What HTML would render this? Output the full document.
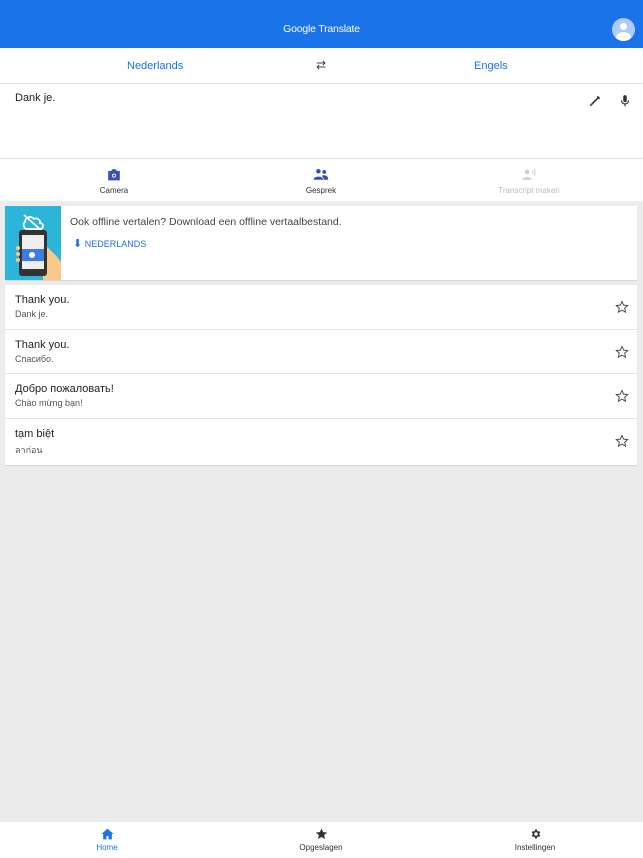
<!DOCTYPE html>
<html><head><meta charset="utf-8"><style>
*{margin:0;padding:0;box-sizing:border-box}
body{width:643px;height:858px;background:#ececec;font-family:"Liberation Sans",Arial,sans-serif;position:relative;overflow:hidden;color:#222}
.hdr{position:absolute;left:0;top:0;width:643px;height:48px;background:#1a73e8;color:#fff;text-align:center;font-size:10.5px;line-height:59px;letter-spacing:-.2px}
.av{position:absolute;right:8px;top:18px;width:23px;height:23px;border-radius:50%;background:#aecbfa;overflow:hidden}
.lang{position:absolute;top:48px;left:0;width:643px;height:36px;background:#fff;border-bottom:1px solid #ddd;font-size:11px;color:#1a73e8}
.lang span{position:absolute;top:12px}
.inp{position:absolute;top:84px;left:0;width:643px;height:75px;background:#fff;border-bottom:1px solid #ddd;font-size:11px}
.tabs{position:absolute;top:159px;left:0;width:643px;height:42px;background:#fff;font-size:8px;color:#333}
.tab{position:absolute;top:0;width:120px;text-align:center}
.tab div{margin-top:3px}
.card{position:absolute;left:5px;width:632px;background:#fff;box-shadow:0 1px 1px rgba(0,0,0,.1)}
.row{height:44.5px;border-bottom:1px solid #e6e6e6;position:relative;padding:9px 0 0 10px}
.row b{display:block;font-weight:normal;font-size:11px;color:#222}
.row i{display:block;font-style:normal;font-size:9px;color:#555;margin-top:3px}
.row svg{position:absolute;right:8px;top:15px}
.bot{position:absolute;left:0;top:822px;width:643px;height:36px;background:#fff;font-size:8px;color:#333}
.bi{position:absolute;top:6px;width:100px;text-align:center}
.bi div{margin-top:1px}
</style></head><body>
<div class="hdr">Google Translate<div class="av"><div style="position:absolute;left:8px;top:5px;width:7px;height:7px;border-radius:50%;background:#fff"></div><div style="position:absolute;left:4px;top:14px;width:15px;height:12px;border-radius:50%;background:#fff"></div></div></div>
<div class="lang"><span style="left:127px">Nederlands</span><span style="left:316px;color:#444;top:10px;font-size:12px">⇄</span><span style="left:474px">Engels</span></div>
<div class="inp"><div style="position:absolute;left:15px;top:8px">Dank je.</div>
<svg style="position:absolute;left:588px;top:10px" width="14" height="14" viewBox="0 0 24 24"><path d="M3 21l3-1 12-12-2-2L4 18z M17 3l4 4-2 2-4-4z" fill="#333"/></svg>
<svg style="position:absolute;left:618px;top:9px" width="14" height="16" viewBox="0 0 24 24"><path d="M12 14a3 3 0 0 0 3-3V5a3 3 0 0 0-6 0v6a3 3 0 0 0 3 3zm5-3a5 5 0 0 1-10 0H5a7 7 0 0 0 6 6.9V21h2v-3.1A7 7 0 0 0 19 11z" fill="#333"/></svg></div>
<div class="tabs">
<div class="tab" style="left:54px"><svg style="margin-top:9px" width="14" height="13" viewBox="0 0 24 22"><path d="M2 5h5l2-3h6l2 3h5v16H2z" fill="#3c4fb5"/><circle cx="12" cy="13" r="3.5" fill="#fff"/><circle cx="12" cy="13" r="2" fill="#3c4fb5"/></svg><div>Camera</div></div>
<div class="tab" style="left:261px"><svg style="margin-top:9px" width="16" height="13" viewBox="0 0 24 20"><circle cx="8" cy="5" r="3.5" fill="#3c4fb5"/><circle cx="17" cy="6" r="3" fill="#3c4fb5"/><path d="M1 17c0-5 14-5 14 0v1H1zM13 12c5-2 10 0 10 5v1h-7c0-3-1-4-3-6z" fill="#3c4fb5"/></svg><div>Gesprek</div></div>
<div class="tab" style="left:469px;color:#bbb"><svg style="margin-top:9px" width="16" height="13" viewBox="0 0 24 20"><circle cx="9" cy="6" r="3.5" fill="#ccc"/><path d="M2 18c0-5 14-5 14 0z" fill="#ccc"/><path d="M18 3v7M21 1v11" stroke="#ccc" stroke-width="1.5"/></svg><div>Transcript maken</div></div>
</div>
<div class="card" style="top:206px;height:74px">
<svg style="position:absolute;left:0;top:0" width="56" height="74" viewBox="0 0 56 74"><rect width="56" height="74" fill="#2bb6d9"/><path d="M20 16a5 5 0 0 1 9-3a4 4 0 0 1 6 4a3 3 0 0 1 0 6H22a4 4 0 0 1-2-7z" fill="none" stroke="#fff" stroke-width="1.8"/><path d="M19 9l18 16" stroke="#fff" stroke-width="1.8"/><path d="M38 38c6 4 14 12 18 18v18H38z" fill="#f7c98a"/><rect x="14" y="24" width="28" height="46" rx="3" fill="#333"/><rect x="17" y="29" width="22" height="34" fill="#eee"/><rect x="17" y="43" width="22" height="12" fill="#3b7de0"/><circle cx="27" cy="49" r="3" fill="#fff"/><circle cx="13" cy="42" r="2" fill="#f7c98a"/><circle cx="13" cy="48" r="2" fill="#f7c98a"/><circle cx="13" cy="54" r="2" fill="#f7c98a"/></svg>
<div style="position:absolute;left:65px;top:10px;font-size:10.5px;color:#444">Ook offline vertalen? Download een offline vertaalbestand.</div>
<div style="position:absolute;left:68px;top:31px;font-size:9px;color:#1a73e8"><span style="font-size:11px">⬇</span> NEDERLANDS</div>
</div>
<div class="card" style="top:285px">
<div class="row"><b>Thank you.</b><i>Dank je.</i><svg width="14" height="14" viewBox="0 0 24 24"><path d="M12 2.5l2.9 6.3 6.9.7-5.2 4.6 1.5 6.8L12 17.4l-6.1 3.5 1.5-6.8-5.2-4.6 6.9-.7z" fill="none" stroke="#444" stroke-width="1.6"/></svg></div>
<div class="row"><b>Thank you.</b><i>Спасибо.</i><svg width="14" height="14" viewBox="0 0 24 24"><path d="M12 2.5l2.9 6.3 6.9.7-5.2 4.6 1.5 6.8L12 17.4l-6.1 3.5 1.5-6.8-5.2-4.6 6.9-.7z" fill="none" stroke="#444" stroke-width="1.6"/></svg></div>
<div class="row"><b>Добро пожаловать!</b><i>Chào mừng bạn!</i><svg width="14" height="14" viewBox="0 0 24 24"><path d="M12 2.5l2.9 6.3 6.9.7-5.2 4.6 1.5 6.8L12 17.4l-6.1 3.5 1.5-6.8-5.2-4.6 6.9-.7z" fill="none" stroke="#444" stroke-width="1.6"/></svg></div>
<div class="row" style="border-bottom:none;height:46px"><b>tạm biệt</b><i style="font-family:'Liberation Sans','Noto Sans CJK SC',sans-serif">ลาก่อน</i><svg width="14" height="14" viewBox="0 0 24 24"><path d="M12 2.5l2.9 6.3 6.9.7-5.2 4.6 1.5 6.8L12 17.4l-6.1 3.5 1.5-6.8-5.2-4.6 6.9-.7z" fill="none" stroke="#444" stroke-width="1.6"/></svg></div>
</div>
<div class="bot">
<div class="bi" style="left:57px;color:#1a73e8"><svg width="13" height="12" viewBox="0 0 24 22"><path d="M12 1L1 11h3v10h6v-6h4v6h6V11h3z" fill="#1a73e8"/></svg><div>Home</div></div>
<div class="bi" style="left:271px"><svg width="13" height="12" viewBox="0 0 24 23"><path d="M12 1l3.2 7 7.6.7-5.8 5 1.8 7.5L12 17.3l-6.8 3.9 1.8-7.5-5.8-5 7.6-.7z" fill="#333"/></svg><div>Opgeslagen</div></div>
<div class="bi" style="left:485px"><svg width="13" height="12" viewBox="0 0 24 24"><path d="M19.4 13a7.5 7.5 0 0 0 0-2l2.1-1.6-2-3.5-2.5 1a7 7 0 0 0-1.7-1L15 3h-4l-.4 2.9a7 7 0 0 0-1.7 1l-2.5-1-2 3.5L6.5 11a7.5 7.5 0 0 0 0 2l-2.1 1.6 2 3.5 2.5-1a7 7 0 0 0 1.7 1L11 21h4l.4-2.9a7 7 0 0 0 1.7-1l2.5 1 2-3.5zM13 15.5a3.5 3.5 0 1 1 0-7 3.5 3.5 0 0 1 0 7z" fill="#333"/></svg><div>Instellingen</div></div>
</div>
</body></html>
